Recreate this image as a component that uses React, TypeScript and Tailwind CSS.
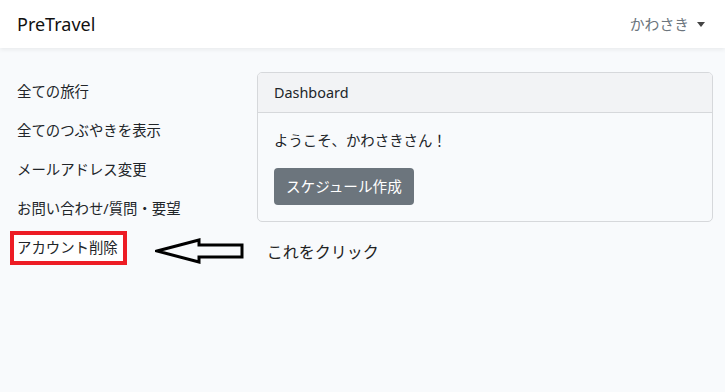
const font = { fontFamily: '"Noto Sans", "Noto Sans CJK JP", sans-serif' }

const links = ['全ての旅行', '全てのつぶやきを表示', 'メールアドレス変更', 'お問い合わせ/質問・要望']

function Arrow() {
  return (
    <svg width="90" height="26" viewBox="0 0 90 26" className="block">
      <path
        d="M2 13 L44 2 L44 7 L87 7 L87 19 L44 19 L44 24 Z"
        fill="none"
        stroke="#000"
        strokeWidth="3"
        strokeLinejoin="miter"
      />
    </svg>
  )
}

export default function App() {
  return (
    <div className="w-[725px] h-[392px] bg-[#f8fafc] text-[#212529] overflow-hidden" style={font}>
      <nav className="h-12 bg-white shadow-[0_2px_4px_rgba(0,0,0,0.06)] flex items-center justify-between px-[17px]">
        <span className="text-[18px] text-[#111]">PreTravel</span>
        <span className="flex items-center gap-2 text-[14.8px] text-[#6c757d] pr-[3px]">
          かわさき
          <span className="w-0 h-0 border-x-[4px] border-x-transparent border-t-[5px] border-t-[#444]" />
        </span>
      </nav>
      <div className="flex pt-6">
        <div className="w-[257px] shrink-0">
          <ul className="flex flex-col">
            {links.map((l) => (
              <li key={l} className="h-[39px] flex items-center pl-[17px] text-[14.4px] whitespace-nowrap">
                {l}
              </li>
            ))}
            <li className="h-[39px] flex items-center whitespace-nowrap">
              <span className="shrink-0 ml-[10px] border-[4px] border-[#ed1c24] bg-white pl-[3px] pr-[5px] h-[34px] flex items-center text-[14.4px]">
                アカウント削除
              </span>
              <span className="shrink-0 ml-[28px] pt-[6px]">
                <Arrow />
              </span>
              <span className="shrink-0 ml-[22px] pt-[8px] text-[16px] leading-6 text-[#222]">これをクリック</span>
            </li>
          </ul>
        </div>
        <div className="flex-1 mr-3 h-[150px] border border-[#d6d8db] rounded-[5px] overflow-hidden">
          <div className="h-10 bg-[#f2f3f5] border-b border-[#d6d8db] flex items-center px-4 text-[14.4px]">Dashboard</div>
          <div className="px-4 pt-[18px]">
            <p className="text-[14.4px] leading-5">ようこそ、かわさきさん！</p>
            <button className="mt-[17px] h-[37px] px-[12px] rounded-[4px] bg-[#6c757d] text-white text-[14.6px]">
              スケジュール作成
            </button>
          </div>
        </div>
      </div>
    </div>
  )
}
